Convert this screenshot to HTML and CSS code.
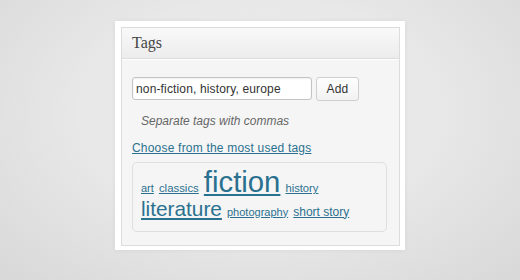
FILE: index.html
```html
<!DOCTYPE html>
<html>
<head>
<meta charset="utf-8">
<link rel="stylesheet" href="styles.css">
</head>
<body>
<div class="frame">
  <div class="panel">
    <div class="panel-head">Tags</div>
    <div class="panel-body">
      <div class="add-row">
        <input class="tag-input" type="text" value="non-fiction, history, europe">
        <button class="add-btn">Add</button>
      </div>
      <p class="hint">Separate tags with commas</p>
      <p class="choose"><a href="#">Choose from the most used tags</a></p>
      <div class="cloud">
        <a href="#" class="t-art">art</a>
        <a href="#" class="t-classics">classics</a>
        <a href="#" class="t-fiction">fiction</a>
        <a href="#" class="t-history">history</a>
        <a href="#" class="t-literature">literature</a>
        <a href="#" class="t-photo">photography</a>
        <a href="#" class="t-short">short story</a>
      </div>
    </div>
  </div>
</div>
</body>
</html>
```
FILE: styles.css
```css
html, body {
  margin: 0;
  padding: 0;
}
body {
  width: 520px;
  height: 280px;
  overflow: hidden;
  background: radial-gradient(ellipse 75% 90% at 50% 40%, #ededed 0%, #e8e8e8 45%, #d6d6d6 100%);
  font-family: "Liberation Sans", Arial, sans-serif;
  padding-top: 21px;
  box-sizing: border-box;
}
.frame {
  width: 290px;
  margin: 0 auto;
  background: #fff;
  padding: 6px 5px 4px 6px;
  box-sizing: border-box;
  box-shadow: 0 0 5px rgba(0, 0, 0, 0.06);
}
.panel {
  border: 1px solid #dcdcdc;
  background: #f5f5f5;
}
.panel-head {
  height: 30px;
  line-height: 30px;
  padding-left: 10px;
  font-family: "Liberation Serif", Georgia, serif;
  font-size: 16px;
  color: #464646;
  background: linear-gradient(#f9f9f9, #ececec);
  border-bottom: 1px solid #dcdcdc;
  box-shadow: 0 1px 0 #fff;
}
.panel-body {
  padding: 18px 12px 13px 10px;
}
.add-row {
  display: flex;
  align-items: flex-start;
  height: 24px;
}
.tag-input {
  width: 180px;
  height: 23px;
  box-sizing: border-box;
  margin: 0;
  padding: 0 3px;
  border: 1px solid #c4c4c4;
  border-radius: 3px;
  background: #fff;
  box-shadow: inset 0 1px 2px rgba(0, 0, 0, 0.07);
  font-family: "Liberation Sans", Arial, sans-serif;
  font-size: 12px;
  letter-spacing: 0.15px;
  color: #333;
}
.add-btn {
  margin: 0 0 0 4px;
  width: 43px;
  height: 24px;
  box-sizing: border-box;
  padding: 0;
  border: 1px solid #cfcfcf;
  border-radius: 3px;
  background: linear-gradient(#fefefe, #f2f2f2);
  font-family: "Liberation Sans", Arial, sans-serif;
  font-size: 12px;
  letter-spacing: 0.2px;
  color: #333;
}
.hint {
  margin: 12px 0 0 9px;
  font-size: 12px;
  line-height: 16px;
  font-style: italic;
  color: #666;
}
.choose {
  margin: 11px 0 0 0;
  font-size: 12px;
  letter-spacing: 0.2px;
  line-height: 16px;
}
.choose a, .cloud a {
  color: #2a7190;
  text-decoration: underline;
}
.cloud {
  margin-top: 6px;
  border: 1px solid #dfdfdf;
  border-radius: 5px;
  padding: 9px 8px 9px 8px;
  font-size: 11px;
  line-height: 20.5px;
}
.t-art { font-size: 11px; }
.t-classics { font-size: 11.4px; margin-left: 2px; }
.t-fiction { font-size: 29.3px; margin-left: 2px; }
.t-history { font-size: 11.2px; margin-left: 2px; }
.t-literature { font-size: 20.8px; }
.t-photo { font-size: 11px; margin-left: 2px; }
.t-short { font-size: 12px; margin-left: 2px; }
```
